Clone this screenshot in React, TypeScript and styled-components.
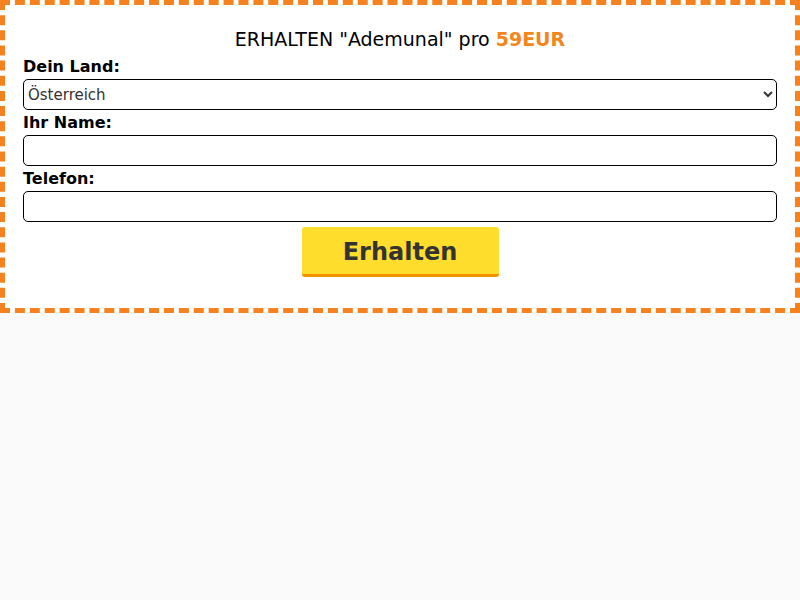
import React from "react";
import styled, { createGlobalStyle } from "styled-components";

const Global = createGlobalStyle`
  html, body { margin: 0; padding: 0; background: #fafafa; }
  body { font-family: "DejaVu Sans", sans-serif; }
  * { box-sizing: border-box; }
`;

const Box = styled.form`
  background: #fff;
  border: 5px dashed #f5821f;
  padding: 18px 18px 18px;
  width: 800px;
  display: flex;
  flex-direction: column;
`;

const Title = styled.h1`
  margin: 4px 0 3px;
  font-size: 19px;
  line-height: 24px;
  font-weight: normal;
  text-align: center;
  color: #000;
`;

const Price = styled.span`
  color: #f2861a;
  font-weight: bold;
`;

const Label = styled.label`
  display: block;
  font-size: 16px;
  font-weight: bold;
  line-height: 19px;
  margin: 3px 0 3px;
  color: #000;
`;

const Field = styled.input`
  display: block;
  width: 100%;
  height: 31px;
  border: 1px solid #000;
  border-radius: 5px;
  background: #fff;
  font-family: "DejaVu Sans", sans-serif;
  font-size: 15px;
  padding: 0 4px;
`;

const Select = styled.select`
  display: block;
  width: 100%;
  height: 31px;
  border: 1px solid #000;
  border-radius: 5px;
  background: #fff;
  font-family: "DejaVu Sans", sans-serif;
  font-size: 15px;
  color: #333;
  padding: 0;
`;

const Button = styled.button`
  align-self: center;
  margin: 5px 0 13px;
  width: 197px;
  height: 50px;
  padding: 3px 0 0;
  background: #ffdd2d;
  border: none;
  border-bottom: 3px solid #f39200;
  border-radius: 3px;
  font-family: "DejaVu Sans", sans-serif;
  font-size: 24px;
  font-weight: bold;
  color: #333;
  cursor: pointer;
`;

export default function App() {
  return (
    <>
      <Global />
      <Box onSubmit={(e) => e.preventDefault()}>
        <Title>
          ERHALTEN "Ademunal" pro <Price>59EUR</Price>
        </Title>
        <Label>Dein Land:</Label>
        <Select defaultValue="at">
          <option value="at">Österreich</option>
        </Select>
        <Label>Ihr Name:</Label>
        <Field type="text" />
        <Label>Telefon:</Label>
        <Field type="tel" />
        <Button type="submit">Erhalten</Button>
      </Box>
    </>
  );
}
